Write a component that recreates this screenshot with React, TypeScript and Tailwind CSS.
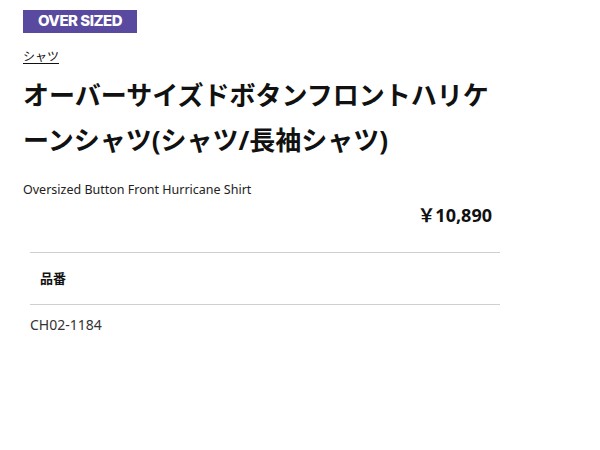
import React from 'react';

const jp = { fontFamily: '"Noto Sans", "Noto Sans CJK JP", sans-serif' };

export default function App() {
  return (
    <div className="min-h-screen bg-white text-[#111]" style={jp}>
      <div className="w-[500px] pl-[23px] pt-[10px]">
        {/* Badge */}
        <div
          className="flex h-[23px] w-[114px] items-center justify-center bg-[#5a4a9f] text-[15px] font-extrabold tracking-[-0.5px] text-white"
          style={{ fontFamily: 'Inter, "Noto Sans", sans-serif' }}
        >
          OVER SIZED
        </div>

        {/* Category link */}
        <div className="mt-[16px] h-[16px] text-[12px] leading-[16px]">
          <span className="underline underline-offset-2">シャツ</span>
        </div>

        {/* Title */}
        <h1 className="mt-[8px] w-[478px] text-[26px] font-bold leading-[45px] text-[#111]">
          オーバーサイズドボタンフロントハリケーンシャツ(シャツ/長袖シャツ)
        </h1>

        {/* English name */}
        <p className="mt-[19px] text-[12.5px] leading-[16px] text-[#222]">
          Oversized Button Front Hurricane Shirt
        </p>

        {/* Price */}
        <div className="mt-[4px] pr-[8px] text-right text-[18px] font-bold leading-[26px]">
          ￥10,890
        </div>

        {/* Spec table */}
        <div className="ml-[7px] mt-[24px] border-y border-[#cfcfcf]">
          <div className="flex h-[51px] items-center pl-[10px] text-[13px] font-bold">品番</div>
        </div>
        <div className="ml-[7px] mt-[10px] text-[14px] leading-[20px] text-[#333]">CH02-1184</div>
      </div>
    </div>
  );
}
